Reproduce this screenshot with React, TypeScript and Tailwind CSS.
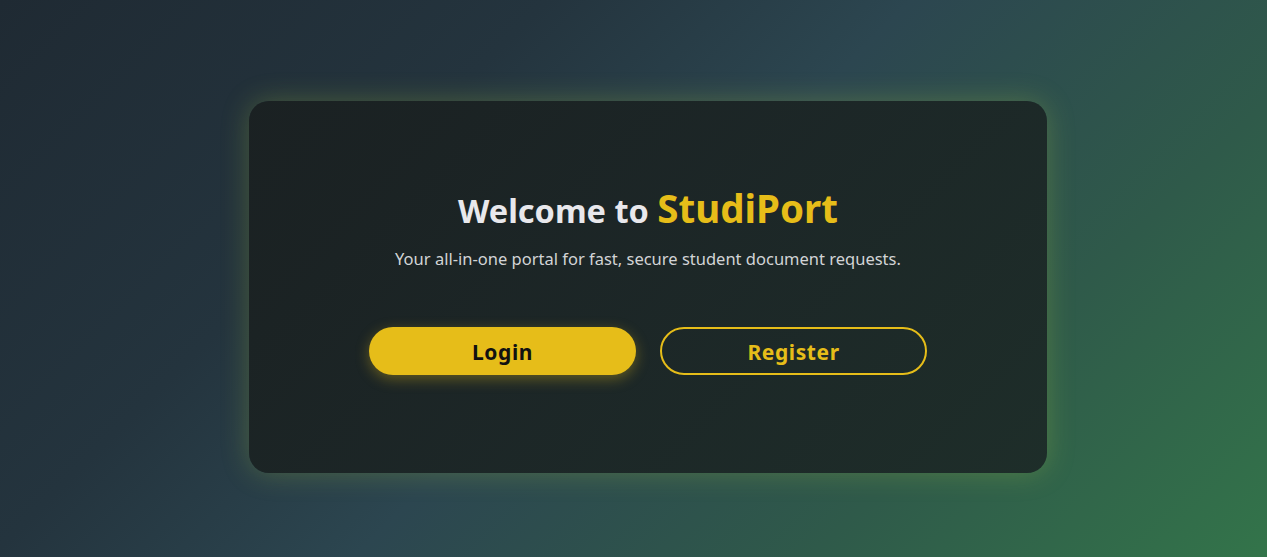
import React from 'react';

export default function App() {
  return (
    <div
      className="min-h-screen w-full flex items-center justify-center pl-[29px] pt-[17px] bg-[linear-gradient(135deg,#1f2a33_0%,#24343e_30%,#2c4650_50%,#2f5a4a_75%,#33744a_100%)]"
      style={{ fontFamily: '"Noto Sans", "Open Sans", sans-serif' }}
    >
      <div className="w-[798px] h-[372px] rounded-[20px] bg-[linear-gradient(135deg,rgba(26,32,33,0.94),rgba(28,40,38,0.9))] shadow-[0_0_28px_rgba(170,200,60,0.28)] flex flex-col items-center pt-[88px]">
        <h1 className="text-[32.5px] font-bold text-[#e8e8ec] leading-none">
          Welcome to <span className="text-[38.5px] text-[#e6bd19]">StudiPort</span>
        </h1>
        <p className="mt-[19px] text-[16.5px] text-[#d2d4d6]">
          Your all-in-one portal for fast, secure student document requests.
        </p>
        <div className="mt-[56px] flex gap-[24px]">
          <button className="w-[267px] h-[48px] pt-[3px] rounded-full bg-[#e6bd19] text-[#111] text-[21px] font-bold tracking-[0.6px] shadow-[0_4px_14px_rgba(230,189,25,0.35)]">
            Login
          </button>
          <button className="w-[267px] h-[48px] pt-[3px] rounded-full border-2 border-[#e6bd19] text-[#e6bd19] text-[21px] font-bold tracking-[0.6px]">
            Register
          </button>
        </div>
      </div>
    </div>
  );
}
